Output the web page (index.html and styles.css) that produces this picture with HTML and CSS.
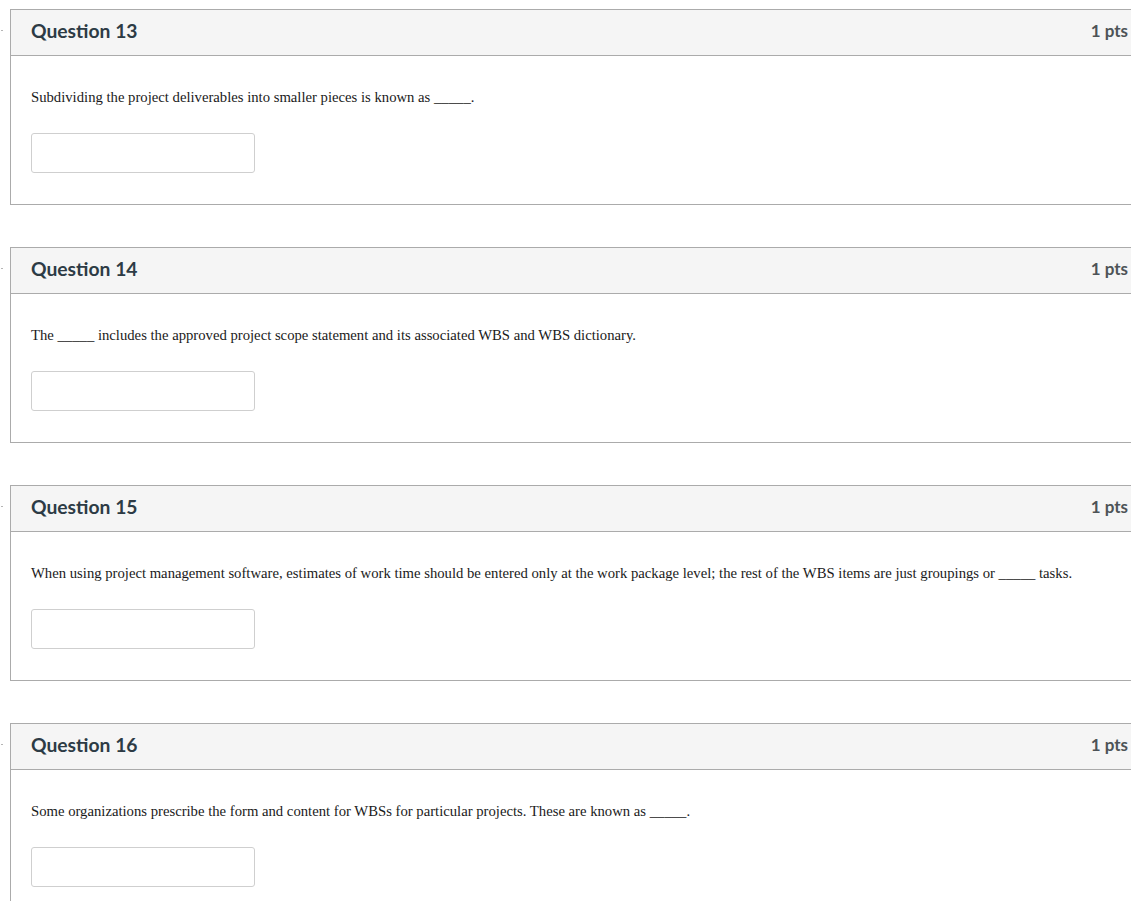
FILE: index.html
```html
<!DOCTYPE html>
<html>
<head>
<meta charset="utf-8">
<link rel="stylesheet" href="styles.css">
</head>
<body>
<div class="page">
  <div class="question">
    <span class="mark"></span>
    <div class="q-header"><span class="q-title">Question 13</span><span class="q-pts">1 pts</span></div>
    <div class="q-body">
      <p class="q-text">Subdividing the project deliverables into smaller pieces is known as _____.</p>
      <div class="answer"></div>
    </div>
  </div>
  <div class="question">
    <span class="mark"></span>
    <div class="q-header"><span class="q-title">Question 14</span><span class="q-pts">1 pts</span></div>
    <div class="q-body">
      <p class="q-text">The _____ includes the approved project scope statement and its associated WBS and WBS dictionary.</p>
      <div class="answer"></div>
    </div>
  </div>
  <div class="question">
    <span class="mark"></span>
    <div class="q-header"><span class="q-title">Question 15</span><span class="q-pts">1 pts</span></div>
    <div class="q-body">
      <p class="q-text">When using project management software, estimates of work time should be entered only at the work package level; the rest of the WBS items are just groupings or _____ tasks.</p>
      <div class="answer"></div>
    </div>
  </div>
  <div class="question">
    <span class="mark"></span>
    <div class="q-header"><span class="q-title">Question 16</span><span class="q-pts">1 pts</span></div>
    <div class="q-body">
      <p class="q-text">Some organizations prescribe the form and content for WBSs for particular projects. These are known as _____.</p>
      <div class="answer"></div>
    </div>
  </div>
</div>
</body>
</html>
```

FILE: styles.css
```css
html, body {
  margin: 0;
  padding: 0;
  background: #ffffff;
  overflow: hidden;
}
.page {
  padding: 9px 0 0 10px;
  display: flex;
  flex-direction: column;
  gap: 42px;
  width: 1131px;
}
.question {
  position: relative;
  border: 1px solid #ababab;
  width: 1131px;
  box-sizing: border-box;
}
.mark {
  position: absolute;
  left: -10px;
  top: 20px;
  width: 2px;
  height: 1px;
  background: #b5b5b5;
}
.q-header {
  height: 46px;
  box-sizing: border-box;
  background: #f5f5f5;
  border-bottom: 1px solid #ababab;
  display: flex;
  align-items: center;
  justify-content: space-between;
  padding: 0 12px 4px 20px;
  font-family: Lato, "Liberation Sans", sans-serif;
  font-weight: 700;
  color: #2d3b45;
}
.q-title {
  font-size: 19.3px;
}
.q-pts {
  font-size: 17px;
  color: #4d5357;
}
.q-body {
  padding: 31px 20px 30px 20px;
  height: 148px;
  box-sizing: border-box;
}
.q-text {
  margin: 0;
  font-family: "Liberation Serif", "Times New Roman", serif;
  font-size: 14.7px;
  line-height: 20px;
  color: #1a1a1a;
}
.answer {
  margin-top: 26px;
  width: 224px;
  height: 40px;
  box-sizing: border-box;
  border: 1px solid #cfcfcf;
  border-radius: 3px;
  background: #fff;
}
```
